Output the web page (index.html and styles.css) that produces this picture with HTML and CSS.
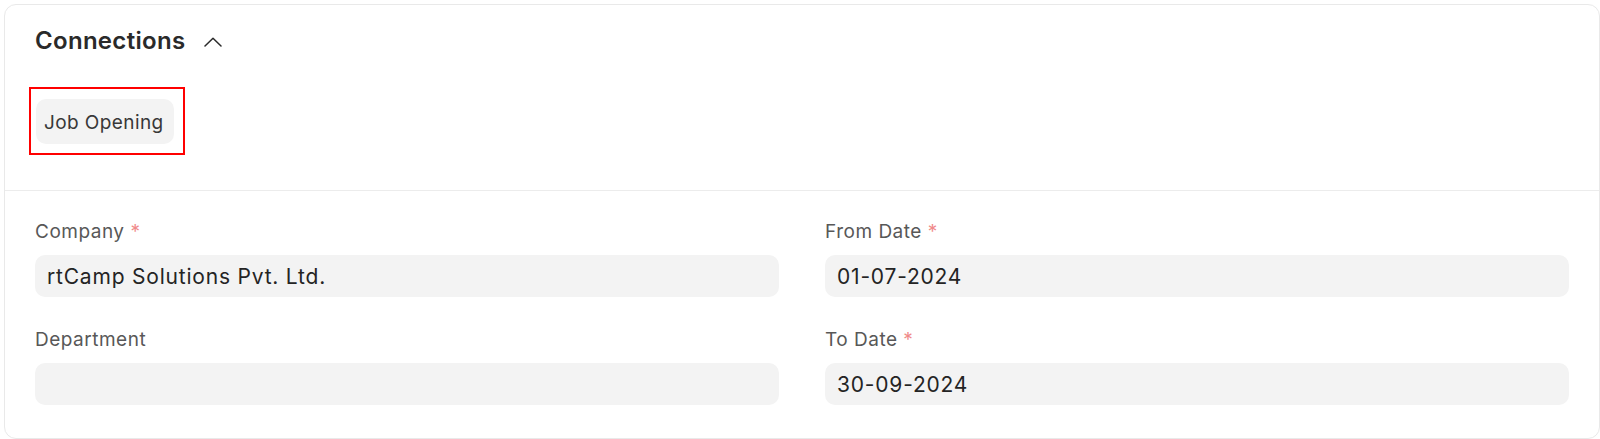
FILE: index.html
```html
<!DOCTYPE html>
<html lang="en">
<head>
<meta charset="utf-8">
<title>Connections</title>
<link rel="stylesheet" href="styles.css">
</head>
<body>
<div class="card">
  <section class="connections">
    <div class="section-head">
      <span class="section-title">Connections</span>
      <svg class="chevron" width="18" height="10" viewBox="0 0 18 10" aria-hidden="true">
        <polyline points="1,9 9,1.2 17,9" fill="none" stroke="#2b2b2b" stroke-width="1.5" stroke-linecap="round" stroke-linejoin="round"/>
      </svg>
    </div>
    <div class="links">
      <div class="highlight">
        <span class="chip">Job Opening</span>
      </div>
    </div>
  </section>
  <section class="fields">
    <div class="field">
      <div class="label">Company <span class="req">*</span></div>
      <div class="input">rtCamp Solutions Pvt. Ltd.</div>
    </div>
    <div class="field">
      <div class="label">From Date <span class="req">*</span></div>
      <div class="input">01-07-2024</div>
    </div>
    <div class="field">
      <div class="label">Department</div>
      <div class="input"></div>
    </div>
    <div class="field">
      <div class="label">To Date <span class="req">*</span></div>
      <div class="input">30-09-2024</div>
    </div>
  </section>
</div>
</body>
</html>
```
FILE: styles.css
```css
html, body {
  margin: 0;
  padding: 0;
  background: #ffffff;
}
body {
  font-family: Inter, "Noto Sans", "Liberation Sans", sans-serif;
  color: #1f1f1f;
}
.card {
  box-sizing: border-box;
  margin: 4px 0 0 4px;
  width: 1596px;
  height: 435px;
  border: 1px solid #e9e9e9;
  border-radius: 12px;
  background: #fff;
}
.connections {
  padding: 21px 0 35px 0;
  border-bottom: 1px solid #ececec;
}
.section-head {
  display: flex;
  align-items: center;
  gap: 19px;
  padding-left: 30px;
  height: 29px;
}
.section-title {
  font-size: 24px;
  line-height: 29px;
  font-weight: 600;
  color: #2a2a2a;
  letter-spacing: 0.3px;
}
.chevron {
  display: block;
  margin-top: 2px;
}
.links {
  padding-left: 24px;
  margin-top: 32px;
}
.highlight {
  display: inline-block;
  border: 2px solid #ff0000;
  padding: 10px 9px 9px 5px;
}
.chip {
  display: flex;
  align-items: center;
  height: 45px;
  box-sizing: border-box;
  padding: 1px 10px 0 8px;
  background: #f3f3f3;
  border-radius: 10px;
  font-size: 19px;
  letter-spacing: 0.4px;
  color: #383838;
}
.fields {
  display: grid;
  grid-template-columns: 744px 744px;
  column-gap: 46px;
  row-gap: 32px;
  padding: 30px 0 0 30px;
}
.label {
  font-size: 19px;
  line-height: 22px;
  letter-spacing: 0.5px;
  color: #585858;
  margin-bottom: 12px;
}
.req {
  color: #f08a8a;
}
.input {
  box-sizing: border-box;
  height: 42px;
  border-radius: 10px;
  background: #f3f3f3;
  padding: 0 12px;
  display: flex;
  align-items: center;
  font-size: 21px;
  letter-spacing: 0.8px;
  color: #242424;
}
```
